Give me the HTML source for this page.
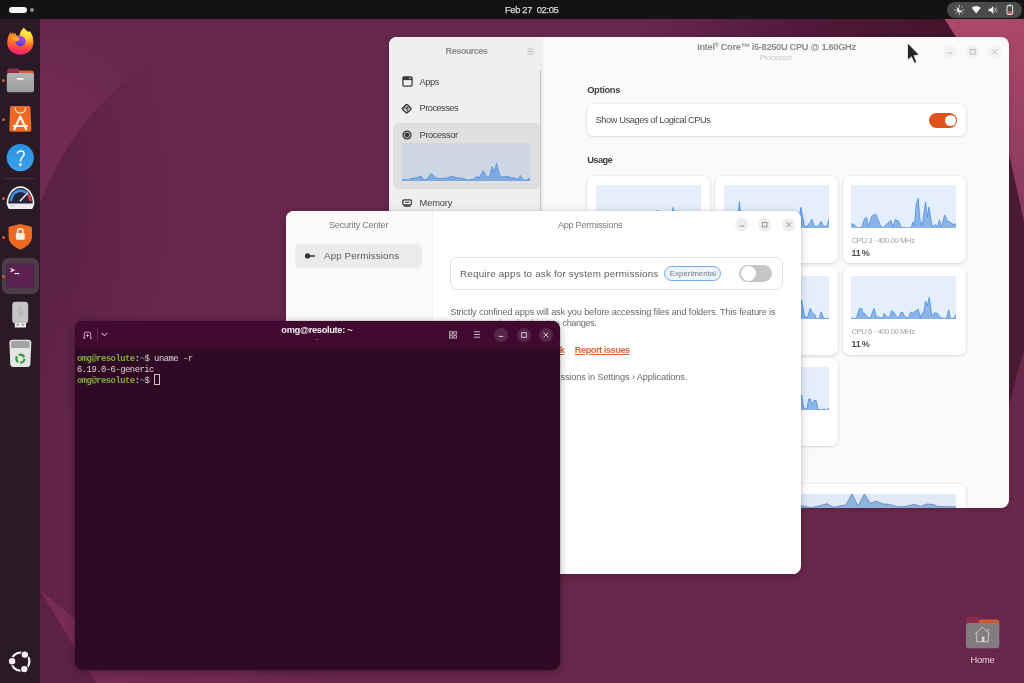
<!DOCTYPE html>
<html lang="en">
<head>
<meta charset="utf-8">
<title>Ubuntu Desktop</title>
<style>
*{box-sizing:border-box;margin:0;padding:0}
html,body{width:1024px;height:683px;overflow:hidden}
body{position:relative;background:#68274b;font-family:"Liberation Sans",sans-serif;color:#3d3d3d;font-size:9px}
.abs,.b{position:absolute}
.b{display:block}
.t{position:absolute;line-height:1;white-space:pre;font-family:"Liberation Sans",sans-serif}
.m{font-family:"Liberation Mono",monospace}
#wall{position:absolute;left:0;top:0;width:1024px;height:683px}
#topbar{position:absolute;left:0;top:0;width:1024px;height:19.3px;background:#131313;color:#f2f2f2}
.lay{position:absolute;left:0;top:0;width:1024px;height:683px;filter:blur(0.3px);will-change:transform}
#topbar .pill{position:absolute;left:9.2px;top:7.4px;width:17.8px;height:5.3px;border-radius:3px;background:#f4f4f4}
#topbar .dot{position:absolute;left:30.4px;top:8.1px;width:3.8px;height:3.8px;border-radius:50%;background:#8c8c8c}
#tray{position:absolute;left:946.5px;top:2px;width:75.5px;height:16px;border-radius:8px;background:#4a4a4a}
#tray svg{position:absolute;left:0;top:0}
#dock{position:absolute;left:0;top:19px;width:40px;height:664px;background:#2a1a26}
.run{position:absolute;left:2.2px;width:3px;height:3px;border-radius:50%;background:#d8592a}
#dock .sep{position:absolute;left:4px;top:159px;width:31px;height:1px;background:#3d2e39}
#dock .act{position:absolute;left:2px;top:239px;width:36.5px;height:36px;border-radius:7px;background:#4c3c47}
.win{position:absolute;filter:blur(0.3px);will-change:transform}
.wb{position:absolute;border-radius:8px;overflow:hidden}
.sh{position:absolute;border-radius:8px}
.card{box-shadow:0 0 0 0.5px rgba(0,0,0,.04),0 1px 3px rgba(0,0,0,.13)}
</style>
</head>
<body>
<svg id="wall" width="1024" height="683" viewBox="0 0 1024 683">
<defs>
 <radialGradient id="w1" gradientUnits="userSpaceOnUse" cx="50" cy="200" r="150" gradientTransform="translate(50,200) scale(1,1.7) translate(-50,-200)"><stop offset="0" stop-color="#582040" stop-opacity="0.8"/><stop offset="0.45" stop-color="#5e2244" stop-opacity="0.6"/><stop offset="1" stop-color="#68274b" stop-opacity="0"/></radialGradient>
 <radialGradient id="w0" gradientUnits="userSpaceOnUse" cx="40" cy="150" r="150"><stop offset="0" stop-color="#722c52"/><stop offset="0.6" stop-color="#6d2a4f"/><stop offset="1" stop-color="#68274b" stop-opacity="0"/></radialGradient>
 <linearGradient id="w2" x1="0" y1="0" x2="1" y2="0"><stop offset="0" stop-color="#68274b"/><stop offset="0.5" stop-color="#4f1838"/><stop offset="1" stop-color="#401326"/></linearGradient>
 <linearGradient id="w3" x1="0" y1="0" x2="0" y2="1"><stop offset="0" stop-color="#ad4869"/><stop offset="1" stop-color="#86385f"/></linearGradient>
 <linearGradient id="w4" x1="0" y1="0" x2="1" y2="0"><stop offset="0" stop-color="#7a2c56"/><stop offset="1" stop-color="#6c284d"/></linearGradient>
 <linearGradient id="w5" gradientUnits="userSpaceOnUse" x1="40" y1="0" x2="200" y2="0"><stop offset="0" stop-color="#5b2045" stop-opacity="0.6"/><stop offset="1" stop-color="#68274b" stop-opacity="0"/></linearGradient>
</defs>
<rect width="1024" height="683" fill="#68274b"/>
<path d="M40 19H230Q190 32 150 60Q70 120 40 204Z" fill="url(#w0)"/>
<path d="M40 204Q70 120 150 60Q190 32 230 19H330V420H40Z" fill="url(#w1)"/>
<path d="M40 204Q70 120 150 60Q190 32 230 19H330V683H40Z" fill="url(#w5)"/>
<rect x="640" y="19" width="360" height="60" fill="url(#w2)"/>
<path d="M944.5 19H1024V222L1006 140L990 90Z" fill="url(#w3)"/>
<path d="M1008 150L1024 222V350L1008 408Z" fill="#4b1a33"/>
<path d="M40 590L100 640L300 683H40Z" fill="#5e2246"/>
<path d="M40 590L75 619L110 650L330 683H96Z" fill="url(#w4)"/>
</svg>
<div class="lay">
<div id="topbar">
<div class="pill"></div><div class="dot"></div>
<span class="t" style="left:504.9px;top:5px;font-size:9.4px;color:#d8d8d8;letter-spacing:-0.332px;-webkit-text-stroke:0.25px #d8d8d8;">Feb 27  02:05</span>
<div id="tray">
<svg width="76" height="16" viewBox="0 0 76 16">
 <g fill="none" stroke="#dcdcdc" stroke-width="0.9" stroke-linecap="round">
  <path d="M12.4 3.4v1M12.4 11.6v1M7.8 8h1M16 8h1M9.2 4.8l.7.7M14.9 10.5l.7.7M9.2 11.2l.7-.7M14.9 5.5l.7-.7"/>
 </g>
 <circle cx="12.4" cy="8" r="2.6" fill="#e6e6e6"/>
 <circle cx="13.7" cy="6.9" r="1.7" fill="#4a4a4a"/>
 <path d="M24.6 5.8Q29.2 2.4 33.8 5.8L29.2 11.6Z" fill="#f0f0f0"/>
 <path d="M41.6 6.7h2L46.4 4v8L43.6 9.3h-2Z" fill="#f0f0f0"/>
 <path d="M47.8 6Q49.2 8 47.8 10" stroke="#d0d0d0" stroke-width="0.9" fill="none"/>
 <path d="M49.4 4.8Q51.4 8 49.4 11.2" stroke="#8e8e8e" stroke-width="0.9" fill="none"/>
 <rect x="60" y="3.6" width="5.6" height="8.8" rx="1.4" fill="none" stroke="#dcdcdc" stroke-width="1.1"/>
 <rect x="61.6" y="2.6" width="2.4" height="1.2" fill="#dcdcdc"/>
 <rect x="60.8" y="9.4" width="4" height="2.4" fill="#c96a58"/>
</svg>
</div>
</div>
<div id="dock">
<div class="sep"></div>
<div class="act"></div>
<div class="run" style="top:59.5px"></div>
<div class="run" style="top:98.5px"></div>
<div class="run" style="top:177.5px"></div>
<div class="run" style="top:216.5px"></div>
<div class="run" style="top:255.5px"></div>
<svg class="abs" style="left:0;top:0" width="40" height="664" viewBox="0 19 40 664">
<defs>
 <linearGradient id="ffb" gradientUnits="userSpaceOnUse" x1="20" y1="30" x2="17" y2="55">
  <stop offset="0" stop-color="#ff9a1e"/><stop offset="0.45" stop-color="#ff7a22"/><stop offset="0.8" stop-color="#ff3352"/><stop offset="1" stop-color="#e3218c"/>
 </linearGradient>
 <radialGradient id="ffy" gradientUnits="userSpaceOnUse" cx="27" cy="32" r="15">
  <stop offset="0" stop-color="#fff04a"/><stop offset="0.45" stop-color="#ffd43a" stop-opacity="0.95"/><stop offset="1" stop-color="#ff9a1e" stop-opacity="0"/>
 </radialGradient>
 <linearGradient id="ffp" x1="0.6" y1="0" x2="0.4" y2="1">
  <stop offset="0" stop-color="#b544dc"/><stop offset="0.5" stop-color="#8a44e4"/><stop offset="1" stop-color="#5238cc"/>
 </linearGradient>
 <linearGradient id="hlp" x1="0" y1="0" x2="0" y2="1"><stop offset="0" stop-color="#2a8fe0"/><stop offset="1" stop-color="#3aa4ea"/></linearGradient>
 <linearGradient id="fold" x1="0" y1="0" x2="0" y2="1"><stop offset="0" stop-color="#b4b4b4"/><stop offset="1" stop-color="#9c9c9c"/></linearGradient>
</defs>
<!-- firefox -->
<g>
 <path d="M20.3 54.700C13.300 54.700 7.200 49.800 7.200 42.600C7.200 38.600 8.500 35 10.600 32.300L11.700 34.800L12.800 32.100L14 34.600L15.300 32.900L16.400 35.200L19 35.600L19.800 34.200C20.600 31.600 22.100 29.300 23.900 27.800C24.800 29.600 26.600 30.800 28.400 32L29.700 31.300C32.100 34.200 33.400 38.200 33.400 42.600C33.400 49.800 27.400 54.700 20.300 54.700Z" fill="url(#ffb)"/>
 <path d="M20.3 54.700C13.300 54.700 7.200 49.800 7.200 42.600C7.200 38.600 8.500 35 10.600 32.300L11.700 34.800L12.800 32.100L14 34.600L15.300 32.900L16.400 35.200L19 35.600L19.800 34.200C20.600 31.600 22.100 29.300 23.900 27.800C24.800 29.600 26.600 30.800 28.400 32L29.700 31.300C32.100 34.200 33.400 38.200 33.400 42.600C33.400 49.800 27.400 54.700 20.300 54.700Z" fill="url(#ffy)"/>
 <path d="M16.300 31.800L19.600 34.600L19.400 36.200L16.200 35.400Z" fill="#2a1a26" opacity="0.85"/>
 <circle cx="20.500" cy="41.100" r="5.200" fill="url(#ffp)"/>
 <path d="M11.400 37.800C13.400 36.600 16.800 36.600 19.900 38.600L17.800 41.200C15.800 41.600 13.200 40.600 11.400 37.800Z" fill="#ffb01e"/>
</g>
<!-- files -->
<g>
 <path d="M7 71c0-1.500 1-2.600 2.500-2.600h7.500c1 0 1.600.5 2.200 1.200l.8.900h11.500c1.500 0 2.500 1 2.500 2.500v6H7z" fill="#8a3048"/>
 <path d="M19 70.700h12.400c1.500 0 2.600 1 2.600 2.500v3H19z" fill="#d8602e"/>
 <rect x="6.800" y="73" width="27.200" height="19.300" rx="2.600" fill="url(#fold)"/>
 <rect x="16.800" y="78" width="7" height="1.700" rx="0.800" fill="#f4f4f4"/>
</g>
<!-- app center -->
<g>
 <path d="M11.800 105.900h16.800c1 0 1.700.7 1.800 1.600l1 22c0 1.300-.9 2.300-2.200 2.300h-17.700c-1.300 0-2.200-1-2.200-2.300l.8-22c.1-.9.800-1.600 1.700-1.600z" fill="#ee6a24"/>
 <path d="M15.200 107.500c0 3.400 2.200 5.600 5.200 5.600s5.200-2.200 5.200-5.600" fill="none" stroke="#fbe4d4" stroke-width="1.100"/>
 <path d="M14 130l6.300-13.500 6.300 13.500M13 126h14.800" fill="none" stroke="#fff2ea" stroke-width="2.200" stroke-linejoin="round"/>
</g>
<!-- help -->
<g>
 <circle cx="20.300" cy="157.600" r="13.600" fill="url(#hlp)"/>
 <path d="M17.300 153.300c.6-1.600 1.800-2.400 3.400-2.400 2 0 3.400 1.300 3.400 3.100 0 2.800-3.600 3.300-3.600 7" fill="none" stroke="#fff" stroke-width="1.500" stroke-linecap="round"/>
 <circle cx="20.400" cy="164.600" r="1.400" fill="#fff"/>
</g>
<!-- system monitor -->
<g>
 <path d="M6.600 204c0-9.600 6-17.800 13.900-17.800s13.900 8.200 13.900 17.800l-1.400 3.600c-.4 1-1.200 1.500-2.200 1.500H10.200c-1 0-1.800-.5-2.200-1.500z" fill="#ececec"/>
 <path d="M8.300 203.400c0-8.300 5.400-15.400 12.200-15.400s12.200 7.100 12.200 15.400z" fill="#222638"/>
 <path d="M10.800 201c.4-5.600 4.400-10.400 9.700-10.400 2.300 0 4.300.8 5.900 2.200" fill="none" stroke="#3f8fe4" stroke-width="2.600"/>
 <path d="M28 194.200c1.400 1.800 2.200 4.300 2.400 6.800" fill="none" stroke="#e43a44" stroke-width="2.600"/>
 <path d="M20.300 200.800l7.400-7.800" stroke="#f0f0f0" stroke-width="1.500" stroke-linecap="round"/>
 <rect x="10.500" y="205.300" width="4" height="1.200" fill="#c8c8c8"/>
</g>
<!-- security -->
<g>
 <path d="M20.300 223.900l10.400 2.700c.8.200 1.300.9 1.300 1.700v8.200c0 6-4.600 10.200-11.700 13-7.100-2.800-11.700-7-11.700-13v-8.200c0-.8.500-1.500 1.300-1.700z" fill="#ec6a22"/>
 <rect x="15.900" y="233" width="8.800" height="6.700" rx="0.900" fill="#fbeee6"/>
 <path d="M17.600 233v-1.400c0-1.700 1.200-2.800 2.700-2.800s2.700 1.100 2.700 2.800v1.400" fill="none" stroke="#fbeee6" stroke-width="1.500"/>
</g>
<!-- terminal -->
<g>
 <rect x="6.600" y="264.200" width="27.400" height="23" rx="2.600" fill="#5b2150"/>
 <rect x="6.600" y="264.200" width="27.400" height="23" rx="2.600" fill="none" stroke="#3c2740" stroke-width="0.800"/>
 <path d="M10.600 268.600l3.200 1.600-3.200 1.600" fill="none" stroke="#fff" stroke-width="1.100"/>
 <rect x="14.600" y="273" width="4.600" height="1.100" fill="#fff"/>
</g>
<!-- usb -->
<g>
 <rect x="14.800" y="322" width="11.200" height="5.600" rx="0.600" fill="#f2f2f2"/>
 <rect x="16.400" y="324" width="2.800" height="1.500" fill="#9a9a9a"/><rect x="21.500" y="324" width="2.800" height="1.500" fill="#9a9a9a"/>
 <rect x="12.200" y="301.700" width="16" height="21.600" rx="3.400" fill="#c4c4c4"/>
 <path d="M20.200 306.500v10.500M20.200 314l-2.600-2v-2M20.200 315.500l2.600-2.200v-1.600" fill="none" stroke="#a4a4a4" stroke-width="0.800"/>
</g>
<!-- trash -->
<g>
 <path d="M9.400 342.500c0-1.600 1.100-2.800 2.700-2.800h16.500c1.600 0 2.700 1.200 2.700 2.800l-.9 21.800c-.1 1.500-1.100 2.600-2.600 2.600H12.900c-1.500 0-2.500-1.100-2.600-2.600z" fill="#e4e4e4"/>
 <rect x="11" y="341" width="18.600" height="7" rx="1.600" fill="#a2a2a2"/>
 <circle cx="20.300" cy="358.700" r="4" fill="none" stroke="#2f9a3a" stroke-width="2.200" stroke-dasharray="6.200 2.200"/>
</g>
<!-- ubuntu -->
<g>
 <circle cx="20.400" cy="661.600" r="9" fill="none" stroke="#f6f0f4" stroke-width="2.300"/>
 <circle cx="12.100" cy="661.300" r="4.300" fill="#2a1a26"/><circle cx="24.800" cy="654.600" r="4.300" fill="#2a1a26"/><circle cx="24.300" cy="669.100" r="4.300" fill="#2a1a26"/>
 <circle cx="12.100" cy="661.300" r="3.200" fill="#f6f0f4"/><circle cx="24.800" cy="654.600" r="3.200" fill="#f6f0f4"/><circle cx="24.300" cy="669.100" r="3.200" fill="#f6f0f4"/>
</g>
</svg>
</div>
<svg class="b" style="left:964px;top:615px" width="38" height="36" viewBox="964 615 38 36">
<path d="M966 619.800Q966 617 968.800 617H976.500Q977.800 617 978.600 617.900L980.200 619.600H996.500Q999.300 619.600 999.300 622.400V626H966Z" fill="#8e2c49"/>
<path d="M980.200 619.600H996.500Q999.300 619.600 999.300 622.400V626H977Z" fill="#cf5a30"/>
<rect x="966" y="623.100" width="33.300" height="25.100" rx="2.600" fill="#827b7f"/>
<path d="M974.800 634.400L982.500 627.300L990.200 634.400M976.700 633.300V641.800H988.300V633.300M988 631.400V628.900" fill="none" stroke="#d6d2d4" stroke-width="0.85"/>
<rect x="981.800" y="636.600" width="2.700" height="5.200" fill="#d6d2d4"/>
</svg>
<span class="t" style="left:970.57px;top:656px;font-size:9.3px;color:#f0dcea;letter-spacing:-0.252px;text-shadow:0 1px 2px rgba(0,0,0,.4);">Home</span>
</div>
<div class="sh" style="left:389px;top:37.4px;width:620px;height:470.6px;box-shadow:0 1px 5px rgba(0,0,0,.18)"></div>
<div class="win" id="res" style="left:389px;top:37px;width:620px;height:471px"><div class="wb" style="left:0px;top:0.4px;width:620px;height:470.6px;background:#fafafa">
<div class="b" style="left:0px;top:-0.4px;width:154.2px;height:471px;background:#efefef;"></div>
<div class="b" style="left:154.2px;top:-0.4px;width:1px;height:471px;background:#f5f5f5;"></div>
<span class="t" style="left:56.6px;top:9.6px;font-size:9.2px;color:#8d8d8d;letter-spacing:-0.583px;font-weight:700;">Resources</span>
<svg class="b" style="left:137.6px;top:10.2px" width="7" height="7" viewBox="0 0 7 7"><path d="M0.3 1.1H6.5M0.3 3.6H6.5M0.3 6.1H6.5" stroke="#b4b4b4" stroke-width="0.9"/></svg>
<div class="b" style="left:151.1px;top:33.1px;width:1.2px;height:144.5px;background:#c2c2c2;border-radius:0.6px;"></div>
<div class="b" style="left:3.9px;top:85.2px;width:146.9px;height:66.3px;background:#dfdfdf;border-radius:6px;"></div>
<svg class="b" style="left:12.6px;top:39px" width="11" height="11" viewBox="0 0 11 11"><rect x="0.9" y="0.9" width="9.2" height="9.2" rx="1.3" fill="none" stroke="#3a3a3a" stroke-width="1.3"/><rect x="0.9" y="0.9" width="9.2" height="3.2" fill="#3a3a3a"/><rect x="7.2" y="1.6" width="1.6" height="1.2" fill="#efefef"/></svg>
<svg class="b" style="left:12.4px;top:65.5px" width="11.4" height="11.4" viewBox="-5.7 -5.7 11.4 11.4"><rect x="-3.3" y="-3.3" width="6.6" height="6.6" rx="1.1" transform="rotate(45)" fill="#efefef" stroke="#3a3a3a" stroke-width="1.5"/><path d="M-2.6 -0.8L0.4 -0.2L0.6 2.8M-0.4 -2.4L2.2 0" stroke="#3a3a3a" stroke-width="1.1" fill="none"/></svg>
<svg class="b" style="left:13.3px;top:92.6px" width="10" height="10" viewBox="-5 -5 10 10"><circle r="4.6" fill="#3a3a3a"/><circle r="2.900" fill="none" stroke="#cfcfcf" stroke-width="0.9"/></svg>
<svg class="b" style="left:12.8px;top:161.4px" width="10.4" height="8.4" viewBox="0 0 10.4 8.4"><rect x="0.8" y="0.8" width="8.8" height="5.2" rx="1.6" fill="none" stroke="#3a3a3a" stroke-width="1.3"/><rect x="3" y="2.8" width="4.400" height="1.1" fill="#3a3a3a"/><path d="M1.800 7.200H8.600" stroke="#3a3a3a" stroke-width="1.3"/></svg>
<span class="t" style="left:30.6px;top:40.6px;font-size:9.3px;color:#3f3f3f;letter-spacing:-0.449px;">Apps</span>
<span class="t" style="left:30.6px;top:66.6px;font-size:9.3px;color:#3f3f3f;letter-spacing:-0.557px;">Processes</span>
<span class="t" style="left:30.6px;top:93.6px;font-size:9.3px;color:#3f3f3f;letter-spacing:-0.407px;">Processor</span>
<span class="t" style="left:30.6px;top:161.6px;font-size:9.3px;color:#3f3f3f;letter-spacing:-0.148px;">Memory</span>
<svg class="b" style="left:13.3px;top:105.9px;background:#cdd7e3" width="128.1" height="37.9" viewBox="0 0 128.1 37.9"><path d="M0 36.33 L6.59 37.12 L8.15 35.55 L14.42 34.77 L17.56 33.2 L19.91 33.98 L21.48 37.12 L24.62 36.33 L29.32 30.38 L33.24 34.77 L37.94 35.55 L45.78 34.77 L49.7 33.2 L53.62 34.45 L59.89 35.08 L66.17 37.12 L71.65 36.33 L74.79 33.2 L77.14 34.77 L81.06 27.72 L84.2 33.2 L87.33 33.98 L90 23.8 L92.04 28.5 L94.7 20.36 L97.53 31.64 L99.88 33.98 L105.36 33.2 L110.07 35.08 L111.64 34.45 L116.34 36.33 L118.38 32.42 L121.04 36.8 L124.18 37.12 L127.32 35.08 L128.1 37.12 L128.1 37.9 L0 37.9 Z" fill="#7fa9e0"/><path d="M0 36.33 L6.59 37.12 L8.15 35.55 L14.42 34.77 L17.56 33.2 L19.91 33.98 L21.48 37.12 L24.62 36.33 L29.32 30.38 L33.24 34.77 L37.94 35.55 L45.78 34.77 L49.7 33.2 L53.62 34.45 L59.89 35.08 L66.17 37.12 L71.65 36.33 L74.79 33.2 L77.14 34.77 L81.06 27.72 L84.2 33.2 L87.33 33.98 L90 23.8 L92.04 28.5 L94.7 20.36 L97.53 31.64 L99.88 33.98 L105.36 33.2 L110.07 35.08 L111.64 34.45 L116.34 36.33 L118.38 32.42 L121.04 36.8 L124.18 37.12 L127.32 35.08 L128.1 37.12" fill="none" stroke="#4e8de0" stroke-width="0.7" stroke-linejoin="round"/></svg>
<span class="t" style="left:308.2px;top:5.6px;font-size:9.3px;color:#8d8d8d;letter-spacing:-0.334px;font-weight:700;">Intel<span style="font-size:0.6em;vertical-align:0.5em;line-height:0">®</span> Core™ i5-8250U CPU @ 1.60GHz</span>
<span class="t" style="left:371.1px;top:16.6px;font-size:7.4px;color:#c6c6c6;letter-spacing:-0.190px;">Processor</span>
<svg class="b" style="left:554.3px;top:7.5px" width="13.4" height="13.4" viewBox="-6.7 -6.7 13.4 13.4"><circle r="6.7" fill="#f2f2f2"/><path d="M-2.2 1.4H2.2" stroke="#b0b0b0" stroke-width="0.8" fill="none"/></svg>
<svg class="b" style="left:576.7px;top:7.5px" width="13.4" height="13.4" viewBox="-6.7 -6.7 13.4 13.4"><circle r="6.7" fill="#f2f2f2"/><rect x="-2.4" y="-2.4" width="4.8" height="4.8" stroke="#b0b0b0" stroke-width="0.8" fill="none"/></svg>
<svg class="b" style="left:598.8px;top:7.5px" width="13.4" height="13.4" viewBox="-6.7 -6.7 13.4 13.4"><circle r="6.7" fill="#f2f2f2"/><path d="M-2.4 -2.4L2.4 2.4M2.4 -2.4L-2.4 2.4" stroke="#b0b0b0" stroke-width="0.8" fill="none"/></svg>
<span class="t" style="left:198.2px;top:48.6px;font-size:9.3px;color:#3d3d3d;letter-spacing:-0.333px;font-weight:700;">Options</span>
<div class="b card" style="left:197.8px;top:67px;width:379px;height:32.1px;background:#fff;border-radius:6.5px;"></div>
<span class="t" style="left:206.6px;top:78.6px;font-size:9.3px;color:#4a4a4a;letter-spacing:-0.435px;">Show Usages of Logical CPUs</span>
<div class="b" style="left:540.4px;top:75.4px;width:27.8px;height:15.5px;background:#e1521a;border-radius:7.8px;"></div>
<div class="b" style="left:555.6px;top:77.5px;width:11px;height:11.3px;background:#fff;border-radius:5.6px;"></div>
<span class="t" style="left:198.2px;top:118.6px;font-size:9.3px;color:#3d3d3d;letter-spacing:-0.583px;font-weight:700;">Usage</span>
<div class="b card" style="left:198px;top:138.6px;width:123.4px;height:87.4px;background:#fff;border-radius:6.5px;"></div>
<svg class="b" style="left:206.9px;top:147.3px;background:#e5eefc" width="105" height="43.2" viewBox="0 0 105 43.2"><path d="M0 40.61 L10.5 38.88 L21 41.04 L31.5 38.02 L42 39.74 L52.5 38.88 L58.8 38.88 L61.42 25.06 L64.05 38.02 L71.4 38.88 L74.55 34.56 L77.17 22.46 L79.8 38.02 L89.25 38.88 L96.6 34.56 L105 38.88 L105 43.2 L0 43.2 Z" fill="#8ab4ea"/><path d="M0 40.61 L10.5 38.88 L21 41.04 L31.5 38.02 L42 39.74 L52.5 38.88 L58.8 38.88 L61.42 25.06 L64.05 38.02 L71.4 38.88 L74.55 34.56 L77.17 22.46 L79.8 38.02 L89.25 38.88 L96.6 34.56 L105 38.88" fill="none" stroke="#4d8fe0" stroke-width="0.8" stroke-linejoin="round"/></svg>
<span class="t" style="left:206.9px;top:199.6px;font-size:7.9px;color:#a3a3a3;letter-spacing:-0.532px;">CPU 1 · 400.00 MHz</span>
<span class="t" style="left:206.9px;top:211.6px;font-size:9px;color:#505050;letter-spacing:-0.104px;word-spacing:-1.40px;font-weight:700;">11 %</span>
<div class="b card" style="left:325.8px;top:138.6px;width:123.4px;height:87.4px;background:#fff;border-radius:6.5px;"></div>
<svg class="b" style="left:334.7px;top:147.3px;background:#e5eefc" width="105" height="43.2" viewBox="0 0 105 43.2"><path d="M0 39.74 L5.25 38.88 L12.6 38.02 L14.18 30.24 L15.43 16.42 L16.8 34.56 L21 38.88 L31.5 38.02 L42 39.74 L52.5 34.56 L57.75 38.88 L68.25 32.4 L73.5 30.24 L75.6 30.24 L76.91 22.29 L80.06 39.74 L82.16 42.34 L85.31 38.45 L87.94 34.34 L90.56 41.6 L94.5 41.04 L97.12 36.29 L99.75 41.6 L103.16 40.61 L105 34.34 L105 43.2 L0 43.2 Z" fill="#8ab4ea"/><path d="M0 39.74 L5.25 38.88 L12.6 38.02 L14.18 30.24 L15.43 16.42 L16.8 34.56 L21 38.88 L31.5 38.02 L42 39.74 L52.5 34.56 L57.75 38.88 L68.25 32.4 L73.5 30.24 L75.6 30.24 L76.91 22.29 L80.06 39.74 L82.16 42.34 L85.31 38.45 L87.94 34.34 L90.56 41.6 L94.5 41.04 L97.12 36.29 L99.75 41.6 L103.16 40.61 L105 34.34" fill="none" stroke="#4d8fe0" stroke-width="0.8" stroke-linejoin="round"/></svg>
<span class="t" style="left:334.7px;top:199.6px;font-size:7.9px;color:#a3a3a3;letter-spacing:-0.532px;">CPU 2 · 400.00 MHz</span>
<span class="t" style="left:334.7px;top:211.6px;font-size:9px;color:#505050;letter-spacing:-0.104px;word-spacing:-1.40px;font-weight:700;">11 %</span>
<div class="b card" style="left:453.5px;top:138.6px;width:123.4px;height:87.4px;background:#fff;border-radius:6.5px;"></div>
<svg class="b" style="left:462.4px;top:147.3px;background:#e5eefc" width="105" height="43.2" viewBox="0 0 105 43.2"><path d="M0 38.81 L3.24 39.54 L6.18 42.76 L10.59 42.47 L13.53 33.68 L15.74 32.51 L17.21 41.74 L20.88 31.05 L24.56 29 L26.76 33.68 L28.97 39.54 L31.91 42.91 L34.85 39.83 L40 35.44 L42.21 41.74 L44.12 34.85 L47.35 35.88 L50.29 42.47 L56.18 42.91 L60.29 42.76 L61.76 36.9 L63.53 40.27 L65.29 19.04 L67.21 13.47 L69.12 35.15 L71.18 40.27 L74.56 16.84 L76.47 32.22 L77.94 21.97 L81.18 41.74 L84.85 39.54 L86.32 41.74 L88.53 34.85 L90.44 42.47 L93.68 30.02 L96.62 36.61 L98.09 36.61 L102.5 39.54 L105 38.81 L105 43.2 L0 43.2 Z" fill="#8ab4ea"/><path d="M0 38.81 L3.24 39.54 L6.18 42.76 L10.59 42.47 L13.53 33.68 L15.74 32.51 L17.21 41.74 L20.88 31.05 L24.56 29 L26.76 33.68 L28.97 39.54 L31.91 42.91 L34.85 39.83 L40 35.44 L42.21 41.74 L44.12 34.85 L47.35 35.88 L50.29 42.47 L56.18 42.91 L60.29 42.76 L61.76 36.9 L63.53 40.27 L65.29 19.04 L67.21 13.47 L69.12 35.15 L71.18 40.27 L74.56 16.84 L76.47 32.22 L77.94 21.97 L81.18 41.74 L84.85 39.54 L86.32 41.74 L88.53 34.85 L90.44 42.47 L93.68 30.02 L96.62 36.61 L98.09 36.61 L102.5 39.54 L105 38.81" fill="none" stroke="#4d8fe0" stroke-width="0.8" stroke-linejoin="round"/></svg>
<span class="t" style="left:462.4px;top:199.6px;font-size:7.9px;color:#a3a3a3;letter-spacing:-0.532px;">CPU 3 · 400.00 MHz</span>
<span class="t" style="left:462.4px;top:211.6px;font-size:9px;color:#505050;letter-spacing:-0.104px;word-spacing:-1.40px;font-weight:700;">11 %</span>
<div class="b card" style="left:198px;top:229.8px;width:123.4px;height:87.4px;background:#fff;border-radius:6.5px;"></div>
<svg class="b" style="left:206.9px;top:238.5px;background:#e5eefc" width="105" height="43.2" viewBox="0 0 105 43.2"><path d="M0 40.61 L10.5 38.88 L21 41.04 L31.5 38.02 L42 39.74 L52.5 38.88 L58.8 38.88 L61.42 25.06 L64.05 38.02 L71.4 38.88 L74.55 34.56 L77.17 22.46 L79.8 38.02 L89.25 38.88 L96.6 34.56 L105 38.88 L105 43.2 L0 43.2 Z" fill="#8ab4ea"/><path d="M0 40.61 L10.5 38.88 L21 41.04 L31.5 38.02 L42 39.74 L52.5 38.88 L58.8 38.88 L61.42 25.06 L64.05 38.02 L71.4 38.88 L74.55 34.56 L77.17 22.46 L79.8 38.02 L89.25 38.88 L96.6 34.56 L105 38.88" fill="none" stroke="#4d8fe0" stroke-width="0.8" stroke-linejoin="round"/></svg>
<span class="t" style="left:206.9px;top:290.6px;font-size:7.9px;color:#a3a3a3;letter-spacing:-0.532px;">CPU 4 · 400.00 MHz</span>
<span class="t" style="left:206.9px;top:302.6px;font-size:9px;color:#505050;letter-spacing:-0.104px;word-spacing:-1.40px;font-weight:700;">11 %</span>
<div class="b card" style="left:325.8px;top:229.8px;width:123.4px;height:87.4px;background:#fff;border-radius:6.5px;"></div>
<svg class="b" style="left:334.7px;top:238.5px;background:#e5eefc" width="105" height="43.2" viewBox="0 0 105 43.2"><path d="M0 38.88 L10.5 36.72 L21 39.74 L31.5 34.56 L42 38.88 L52.5 32.4 L63 38.02 L73.5 30.24 L76.12 30.24 L77.59 24.02 L80.53 40.26 L83.37 41.73 L86.31 32.14 L88.52 37.28 L90.72 38.49 L92.19 42.47 L95.03 42.9 L97.23 35.86 L99.43 41.73 L102.38 42.9 L105 41.73 L105 43.2 L0 43.2 Z" fill="#8ab4ea"/><path d="M0 38.88 L10.5 36.72 L21 39.74 L31.5 34.56 L42 38.88 L52.5 32.4 L63 38.02 L73.5 30.24 L76.12 30.24 L77.59 24.02 L80.53 40.26 L83.37 41.73 L86.31 32.14 L88.52 37.28 L90.72 38.49 L92.19 42.47 L95.03 42.9 L97.23 35.86 L99.43 41.73 L102.38 42.9 L105 41.73" fill="none" stroke="#4d8fe0" stroke-width="0.8" stroke-linejoin="round"/></svg>
<span class="t" style="left:334.7px;top:290.6px;font-size:7.9px;color:#a3a3a3;letter-spacing:-0.532px;">CPU 5 · 400.00 MHz</span>
<span class="t" style="left:334.7px;top:302.6px;font-size:9px;color:#505050;letter-spacing:-0.104px;word-spacing:-1.40px;font-weight:700;">11 %</span>
<div class="b card" style="left:453.5px;top:229.8px;width:123.4px;height:87.4px;background:#fff;border-radius:6.5px;"></div>
<svg class="b" style="left:462.4px;top:238.5px;background:#e5eefc" width="105" height="43.2" viewBox="0 0 105 43.2"><path d="M0 41.44 L2.5 42.91 L5.44 41.74 L8.38 32.66 L10.59 32.36 L12.06 37.34 L14.26 37.78 L15.74 40.71 L19.41 42.17 L21.62 35.59 L23.09 32.36 L25.29 40.71 L28.97 41.44 L31.18 42.61 L33.38 37.34 L35.59 41.15 L38.53 41.44 L40.29 34.85 L42.21 35.59 L45.15 40.27 L48.09 41.74 L49.56 36.76 L51.76 36.32 L53.24 40.27 L57.35 42.17 L59.85 35.88 L61.76 37.34 L64.26 35.29 L67.21 32.95 L69.41 41.44 L71.18 37.05 L72.65 37.05 L74.56 25.04 L76.32 29.73 L78.24 21.23 L80.88 39.98 L83.38 36.76 L86.32 37.34 L89.26 41.44 L93.68 42.61 L95.59 42.17 L97.65 33.83 L99.56 42.61 L103.24 42.17 L105 38.51 L105 43.2 L0 43.2 Z" fill="#8ab4ea"/><path d="M0 41.44 L2.5 42.91 L5.44 41.74 L8.38 32.66 L10.59 32.36 L12.06 37.34 L14.26 37.78 L15.74 40.71 L19.41 42.17 L21.62 35.59 L23.09 32.36 L25.29 40.71 L28.97 41.44 L31.18 42.61 L33.38 37.34 L35.59 41.15 L38.53 41.44 L40.29 34.85 L42.21 35.59 L45.15 40.27 L48.09 41.74 L49.56 36.76 L51.76 36.32 L53.24 40.27 L57.35 42.17 L59.85 35.88 L61.76 37.34 L64.26 35.29 L67.21 32.95 L69.41 41.44 L71.18 37.05 L72.65 37.05 L74.56 25.04 L76.32 29.73 L78.24 21.23 L80.88 39.98 L83.38 36.76 L86.32 37.34 L89.26 41.44 L93.68 42.61 L95.59 42.17 L97.65 33.83 L99.56 42.61 L103.24 42.17 L105 38.51" fill="none" stroke="#4d8fe0" stroke-width="0.8" stroke-linejoin="round"/></svg>
<span class="t" style="left:462.4px;top:290.6px;font-size:7.9px;color:#a3a3a3;letter-spacing:-0.532px;">CPU 6 · 400.00 MHz</span>
<span class="t" style="left:462.4px;top:302.6px;font-size:9px;color:#505050;letter-spacing:-0.104px;word-spacing:-1.40px;font-weight:700;">11 %</span>
<div class="b card" style="left:198px;top:321px;width:123.4px;height:87.4px;background:#fff;border-radius:6.5px;"></div>
<svg class="b" style="left:206.9px;top:329.7px;background:#e5eefc" width="105" height="43.2" viewBox="0 0 105 43.2"><path d="M0 40.61 L10.5 38.88 L21 41.04 L31.5 38.02 L42 39.74 L52.5 38.88 L58.8 38.88 L61.42 25.06 L64.05 38.02 L71.4 38.88 L74.55 34.56 L77.17 22.46 L79.8 38.02 L89.25 38.88 L96.6 34.56 L105 38.88 L105 43.2 L0 43.2 Z" fill="#8ab4ea"/><path d="M0 40.61 L10.5 38.88 L21 41.04 L31.5 38.02 L42 39.74 L52.5 38.88 L58.8 38.88 L61.42 25.06 L64.05 38.02 L71.4 38.88 L74.55 34.56 L77.17 22.46 L79.8 38.02 L89.25 38.88 L96.6 34.56 L105 38.88" fill="none" stroke="#4d8fe0" stroke-width="0.8" stroke-linejoin="round"/></svg>
<span class="t" style="left:206.9px;top:381.6px;font-size:7.9px;color:#a3a3a3;letter-spacing:-0.532px;">CPU 7 · 400.00 MHz</span>
<span class="t" style="left:206.9px;top:393.6px;font-size:9px;color:#505050;letter-spacing:-0.104px;word-spacing:-1.40px;font-weight:700;">11 %</span>
<div class="b card" style="left:325.8px;top:321px;width:123.4px;height:87.4px;background:#fff;border-radius:6.5px;"></div>
<svg class="b" style="left:334.7px;top:329.7px;background:#e5eefc" width="105" height="43.2" viewBox="0 0 105 43.2"><path d="M0 38.88 L10.5 36.72 L21 39.74 L31.5 34.56 L42 38.88 L52.5 32.4 L63 38.02 L73.5 30.24 L76.12 32.4 L77.59 28.08 L79.8 41.47 L82.64 42.16 L84.84 31.8 L86.31 31.8 L88.2 38.19 L89.98 33.26 L92.19 33.7 L94.08 42.6 L97.97 42.9 L100.17 41.9 L102.38 43.2 L105 41.13 L105 43.2 L0 43.2 Z" fill="#8ab4ea"/><path d="M0 38.88 L10.5 36.72 L21 39.74 L31.5 34.56 L42 38.88 L52.5 32.4 L63 38.02 L73.5 30.24 L76.12 32.4 L77.59 28.08 L79.8 41.47 L82.64 42.16 L84.84 31.8 L86.31 31.8 L88.2 38.19 L89.98 33.26 L92.19 33.7 L94.08 42.6 L97.97 42.9 L100.17 41.9 L102.38 43.2 L105 41.13" fill="none" stroke="#4d8fe0" stroke-width="0.8" stroke-linejoin="round"/></svg>
<span class="t" style="left:334.7px;top:381.6px;font-size:7.9px;color:#a3a3a3;letter-spacing:-0.532px;">CPU 8 · 400.00 MHz</span>
<span class="t" style="left:334.7px;top:393.6px;font-size:9px;color:#505050;letter-spacing:-0.104px;word-spacing:-1.40px;font-weight:700;">11 %</span>
<div class="b card" style="left:198px;top:447.1px;width:378.6px;height:55.5px;background:#fff;border-radius:6.5px;"></div>
<svg class="b" style="left:206.9px;top:456.2px;background:#e0e9f6" width="360.6" height="14.9" viewBox="0 0 360.6 14.9"><path d="M0.1 12.4 L44.1 10.4 L84.1 12.9 L124.1 11.4 L164.1 12.4 L194.1 11.4 L205.96 11.88 L215.18 13.73 L223.09 11.88 L230.99 9.77 L237.58 13.2 L244.17 11.88 L249.96 11.09 L256.02 0.02 L262.08 11.88 L268.41 0.02 L274.47 9.25 L280.53 7.14 L286.33 9.77 L294.23 10.56 L302.14 12.93 L310.04 12.41 L317.95 10.3 L324.53 12.41 L331.12 10.04 L337.71 10.56 L341.66 12.41 L360.63 12.93 L360.63 14.9 L0.1 14.9 Z" fill="#90b2dc"/><path d="M0.1 12.4 L44.1 10.4 L84.1 12.9 L124.1 11.4 L164.1 12.4 L194.1 11.4 L205.96 11.88 L215.18 13.73 L223.09 11.88 L230.99 9.77 L237.58 13.2 L244.17 11.88 L249.96 11.09 L256.02 0.02 L262.08 11.88 L268.41 0.02 L274.47 9.25 L280.53 7.14 L286.33 9.77 L294.23 10.56 L302.14 12.93 L310.04 12.41 L317.95 10.3 L324.53 12.41 L331.12 10.04 L337.71 10.56 L341.66 12.41 L360.63 12.93" fill="none" stroke="#5f86ba" stroke-width="0.8" stroke-linejoin="round"/></svg>
</div></div>
<div class="sh" style="left:286.3px;top:210.5px;width:515px;height:363.3px;box-shadow:0 2px 9px rgba(0,0,0,.22),0 0 0 0.5px rgba(0,0,0,.08)"></div>
<div class="win" id="sec" style="left:286px;top:210px;width:516px;height:364px"><div class="wb" style="left:0.3px;top:0.5px;width:515px;height:363.3px;background:#fff">
<div class="b" style="left:-0.3px;top:0px;width:146px;height:364.5px;background:#fafafa;"></div>
<div class="b" style="left:145.7px;top:0px;width:1px;height:364.5px;background:#f1f1f1;"></div>
<span class="t" style="left:42.7px;top:10.5px;font-size:9.2px;color:#7c7c7c;letter-spacing:-0.274px;">Security Center</span>
<div class="b" style="left:8.6px;top:33.1px;width:127.5px;height:24.1px;background:#ebebeb;border-radius:5px;"></div>
<svg class="b" style="left:17.3px;top:41.5px" width="12" height="8" viewBox="0 0 12 8"><circle cx="3.5" cy="3.9" r="2.6" fill="#333"/><rect x="5" y="3.2" width="6.2" height="1.5" rx="0.6" fill="#333"/></svg>
<span class="t" style="left:37.7px;top:40.5px;font-size:9.8px;color:#5c5c5c;letter-spacing:0.118px;">App Permissions</span>
<span class="t" style="left:271.6px;top:10.5px;font-size:9.2px;color:#7c7c7c;letter-spacing:-0.302px;">App Permissions</span>
<svg class="b" style="left:449.1px;top:7.7px" width="13.4" height="13.4" viewBox="-6.7 -6.7 13.4 13.4"><circle r="6.7" fill="#eeeeee"/><path d="M-2.2 1.4H2.2" stroke="#8a8a8a" stroke-width="0.9" fill="none"/></svg>
<svg class="b" style="left:472.2px;top:7.7px" width="13.4" height="13.4" viewBox="-6.7 -6.7 13.4 13.4"><circle r="6.7" fill="#eeeeee"/><rect x="-2.2" y="-2.2" width="4.4" height="4.4" stroke="#8a8a8a" stroke-width="0.9" fill="none"/></svg>
<svg class="b" style="left:495.3px;top:7.7px" width="13.4" height="13.4" viewBox="-6.7 -6.7 13.4 13.4"><circle r="6.7" fill="#eeeeee"/><path d="M-2.4 -2.4L2.4 2.4M2.4 -2.4L-2.4 2.4" stroke="#8a8a8a" stroke-width="0.9" fill="none"/></svg>
<div class="b" style="left:163.9px;top:46.2px;width:332.9px;height:33.8px;background:#fff;border-radius:7px;border:1px solid #e2e2e2;"></div>
<span class="t" style="left:173.8px;top:58.5px;font-size:9.8px;color:#5c5c5c;letter-spacing:0.198px;">Require apps to ask for system permissions</span>
<div class="b" style="left:378px;top:55.6px;width:56.7px;height:15px;background:#eef5fd;border-radius:7.5px;border:1px solid #74abe2;"></div>
<span class="t" style="left:383.5px;top:59.5px;font-size:7.9px;color:#6b7a88;letter-spacing:0.016px;">Experimental</span>
<div class="b" style="left:453.2px;top:54.1px;width:32.8px;height:17.9px;background:#c6c6c6;border-radius:9px;"></div>
<div class="b" style="left:454.3px;top:55.2px;width:15.8px;height:15.7px;background:#fff;border-radius:8px;"></div>
<span class="t" style="left:163.9px;top:97.5px;font-size:9.2px;color:#6a6a6a;letter-spacing:-0.151px;">Strictly confined apps will ask you before accessing files and folders. This feature is</span>
<span class="t" style="left:163.9px;top:108.5px;font-size:9.2px;color:#a8a8a8;letter-spacing:-0.099px;">experimental and subject to </span>
<span class="t" style="left:276.2px;top:108.5px;font-size:9.2px;color:#6a6a6a;letter-spacing:-0.442px;">changes.</span>
<span class="t" style="left:221.7px;top:135.5px;font-size:9.2px;color:#d9673c;letter-spacing:-0.461px;font-weight:700;text-decoration:underline;text-decoration-thickness:0.8px;text-underline-offset:1.4px;">Give feedback</span>
<span class="t" style="left:288.5px;top:135.5px;font-size:9.2px;color:#d9673c;letter-spacing:-0.449px;font-weight:700;text-decoration:underline;text-decoration-thickness:0.8px;text-underline-offset:1.4px;">Report issues</span>
<span class="t" style="left:163.9px;top:162.5px;font-size:9.2px;color:#6a6a6a;letter-spacing:-0.133px;">You can also manage permissions in Settings › Applications.</span>
</div></div>
<div class="sh" style="left:74.8px;top:321px;width:485px;height:349px;box-shadow:0 2px 10px rgba(0,0,0,.3),0 0 0 0.5px rgba(0,0,0,.18)"></div>
<div class="win" id="term" style="left:74px;top:321px;width:486px;height:349px"><div class="wb" style="left:0.8px;top:0px;width:485px;height:349px;background:#300a24">
<div class="b" style="left:0px;top:0px;width:485px;height:27px;background:#41092f;"></div>
<svg class="b" style="left:8.2px;top:9.6px" width="9" height="8" viewBox="0 0 9 8"><path d="M1.3 7.2V3Q1.3 1.2 3.1 1.2H5.900Q7.700 1.200 7.700 3V7.200" fill="none" stroke="#dcc4d4" stroke-width="0.85"/><path d="M0.2 7.200H2.200M6.800 7.200H8.800" stroke="#dcc4d4" stroke-width="0.85"/><path d="M4.500 3V6M3 4.500H6" stroke="#dcc4d4" stroke-width="0.85"/></svg>
<div class="b" style="left:22.5px;top:7.2px;width:0.8px;height:12.8px;background:#5d3452;"></div>
<svg class="b" style="left:26px;top:11.4px" width="7" height="5" viewBox="0 0 7 5"><path d="M0.600 0.900L3.500 3.800L6.400 0.900" fill="none" stroke="#e8dfe5" stroke-width="1"/></svg>
<span class="t" style="left:206.53px;top:5px;font-size:9.3px;color:#f4eef2;letter-spacing:-0.333px;font-weight:700;">omg@resolute: ~</span>
<span class="t" style="left:240.45px;top:15px;font-size:6px;color:#8c6a82;">~</span>
<svg class="b" style="left:374.1px;top:9.6px" width="8" height="8" viewBox="0 0 8 8"><g fill="none" stroke="#d8ccd4" stroke-width="0.800"><rect x="0.500" y="0.700" width="2.800" height="2.400"/><rect x="4.700" y="0.700" width="2.800" height="2.400"/><rect x="0.500" y="4.700" width="2.800" height="2.400"/><rect x="4.700" y="4.700" width="2.800" height="2.400"/></g></svg>
<svg class="b" style="left:399.4px;top:10px" width="6" height="7" viewBox="0 0 6 7"><path d="M0 0.800H6M0 3.500H6M0 6.200H6" stroke="#d8ccd4" stroke-width="0.900"/></svg>
<svg class="b" style="left:419.3px;top:6.5px" width="14" height="14" viewBox="-7 -7 14 14"><circle r="7" fill="#57274a"/><path d="M-2.2 1.4H2.2" stroke="#eadfe7" stroke-width="0.85" fill="none"/></svg>
<svg class="b" style="left:441.8px;top:6.5px" width="14" height="14" viewBox="-7 -7 14 14"><circle r="7" fill="#57274a"/><rect x="-2.3" y="-2.3" width="4.6" height="4.6" stroke="#eadfe7" stroke-width="0.85" fill="none"/></svg>
<svg class="b" style="left:464.2px;top:6.5px" width="14" height="14" viewBox="-7 -7 14 14"><circle r="7" fill="#57274a"/><path d="M-2.4 -2.4L2.4 2.4M2.4 -2.4L-2.4 2.4" stroke="#eadfe7" stroke-width="0.85" fill="none"/></svg>
<span class="t m" style="left:2.2px;top:34px;font-size:8.9px;color:#7fab3a;letter-spacing:-0.521px;font-weight:700;">omg@resolute</span>
<span class="t m" style="left:60.04px;top:34px;font-size:8.9px;color:#dcd3d8;letter-spacing:-0.521px;font-weight:700;">:</span>
<span class="t m" style="left:64.86px;top:34px;font-size:8.9px;color:#5a82b4;letter-spacing:-0.521px;font-weight:700;">~</span>
<span class="t m" style="left:69.68px;top:34px;font-size:8.9px;color:#dcd3d8;letter-spacing:-0.521px;">$</span>
<span class="t m" style="left:2.2px;top:56px;font-size:8.9px;color:#7fab3a;letter-spacing:-0.521px;font-weight:700;">omg@resolute</span>
<span class="t m" style="left:60.04px;top:56px;font-size:8.9px;color:#dcd3d8;letter-spacing:-0.521px;font-weight:700;">:</span>
<span class="t m" style="left:64.86px;top:56px;font-size:8.9px;color:#5a82b4;letter-spacing:-0.521px;font-weight:700;">~</span>
<span class="t m" style="left:69.68px;top:56px;font-size:8.9px;color:#dcd3d8;letter-spacing:-0.521px;">$</span>
<span class="t m" style="left:79.32px;top:34px;font-size:8.9px;color:#dcd3d8;letter-spacing:-0.521px;">uname -r</span>
<span class="t m" style="left:2.2px;top:45px;font-size:8.9px;color:#dcd3d8;letter-spacing:-0.521px;">6.19.0-6-generic</span>
<div class="b" style="left:79.4px;top:53px;width:6px;height:11.4px;border:0.9px solid #cfc6cb;"></div>
</div></div>
<svg class="b" style="left:904px;top:40px;z-index:50" width="22" height="28" viewBox="904 40 22 28">
<path d="M908.500 45.2L908.500 60.400L912.200 57.400L915.100 63.800L916.900 63.100L914.100 56.400L919.100 55.600Z" fill="#b8b8b8" opacity="0.45"/>
<path d="M907.900 43.700L907.900 59.300L911.600 56.200L914.500 62.700L916.200 62L913.500 55.300L918.500 54.500Z" fill="#262626"/>
</svg>
</body>
</html>
